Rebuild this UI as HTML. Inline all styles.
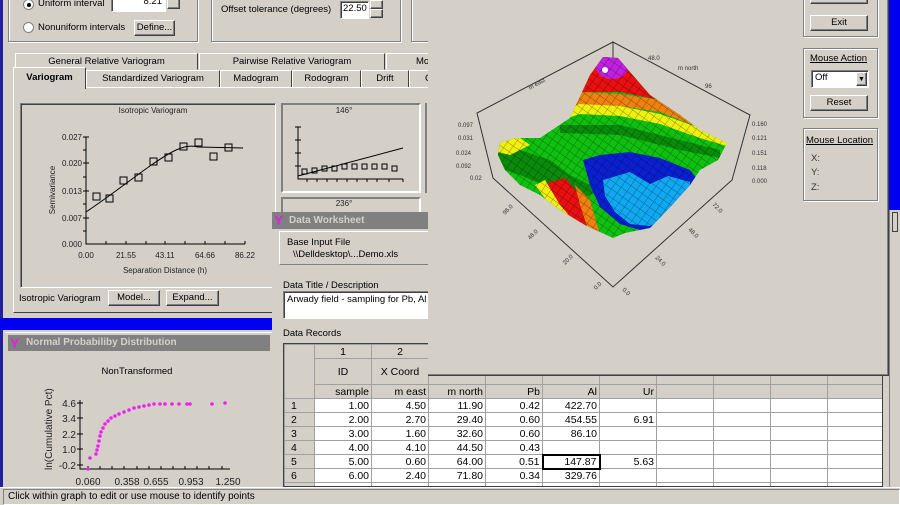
<!DOCTYPE html>
<html><head><meta charset="utf-8"><style>
*{box-sizing:border-box;margin:0;padding:0}
body{width:900px;height:505px;overflow:hidden;background:#d4d0c8;font-family:"Liberation Sans",sans-serif;font-size:9.5px;color:#000;position:relative}
.a{position:absolute;white-space:nowrap}
.grp{position:absolute;border:1px solid #808080;box-shadow:inset 1px 1px 0 #fff,1px 1px 0 #fff}
.btn{position:absolute;background:#d4d0c8;border:1px solid;border-color:#fff #404040 #404040 #fff;box-shadow:inset -1px -1px 0 #808080;text-align:center;line-height:14px}
.sunk{position:absolute;background:#fff;border:1px solid;border-color:#808080 #fff #fff #808080;box-shadow:inset 1px 1px 0 #404040;white-space:nowrap;overflow:hidden}
.tab{position:absolute;border:1px solid;border-color:#fff #404040 transparent #fff;text-align:center;line-height:15px;background:#d4d0c8;white-space:nowrap;overflow:hidden}
.raise{position:absolute;border:1px solid;border-color:#fff #808080 #808080 #fff}
table{border-collapse:collapse;font-size:10.5px}
td{border:1px solid #a0a0a0;height:14px;padding:0 2px;text-align:right;background:#fff;line-height:12px;white-space:nowrap;overflow:hidden}
td.h{background:#d4d0c8;text-align:center}
td.rh{background:#d4d0c8;text-align:left;padding-left:6px}
</style></head><body>
<div class="a" style="left:0;top:0;width:3px;height:505px;background:#2020a0"></div>

<!-- top groups -->
<div class="grp" style="left:8px;top:-6px;width:190px;height:48px"></div>
<div class="a" style="left:23px;top:-1px;width:11px;height:11px;border-radius:50%;background:#fff;border:1px solid #808080"></div>
<div class="a" style="left:27px;top:3px;width:4px;height:4px;border-radius:50%;background:#000"></div>
<div class="a" style="left:38px;top:-2px">Uniform interval</div>
<div class="sunk" style="left:111px;top:-6px;width:55px;height:18px;text-align:right;padding-right:3px;line-height:14px">8.21</div>
<div class="btn" style="left:167px;top:-2px;width:13px;height:11px"></div>
<div class="a" style="left:23px;top:22px;width:11px;height:11px;border-radius:50%;background:#fff;border:1px solid #808080"></div>
<div class="a" style="left:38px;top:22px">Nonuniform intervals</div>
<div class="btn" style="left:134px;top:20px;width:41px;height:16px">Define...</div>

<div class="grp" style="left:211px;top:-6px;width:190px;height:48px"></div>
<div class="a" style="left:221px;top:4px">Offset tolerance (degrees)</div>
<div class="sunk" style="left:340px;top:1px;width:29px;height:18px;line-height:14px;padding-left:2px">22.50</div>
<div class="btn" style="left:370px;top:0;width:13px;height:9px"></div>
<div class="btn" style="left:370px;top:9px;width:13px;height:9px"></div>
<div class="grp" style="left:411px;top:-6px;width:30px;height:48px"></div>

<!-- tabs -->
<div class="tab" style="left:15px;top:53px;width:183px;height:17px">General Relative Variogram</div>
<div class="tab" style="left:199px;top:53px;width:186px;height:17px">Pairwise Relative Variogram</div>
<div class="tab" style="left:386px;top:53px;width:50px;height:17px;text-align:left;padding-left:29px">Mo</div>
<div class="tab" style="left:86px;top:70px;width:134px;height:18px">Standardized Variogram</div>
<div class="tab" style="left:220px;top:70px;width:72px;height:18px">Madogram</div>
<div class="tab" style="left:292px;top:70px;width:69px;height:18px">Rodogram</div>
<div class="tab" style="left:361px;top:70px;width:48px;height:18px">Drift</div>
<div class="tab" style="left:409px;top:70px;width:30px;height:18px;text-align:left;padding-left:15px">C</div>
<div class="a" style="left:13px;top:87px;width:420px;height:226px;border-left:1px solid #fff;border-top:1px solid #fff;border-bottom:1px solid #404040"></div>
<div class="tab" style="left:13px;top:67px;width:73px;height:22px;font-weight:bold;border-bottom:none;line-height:20px">Variogram</div>

<!-- isotropic graph -->
<div class="a" style="left:20px;top:103px;width:256px;height:185px;border:1px solid;border-color:#808080 #fff #fff #808080;box-shadow:inset 1px 1px 0 #404040"></div>
<svg class="a" style="left:0;top:0" width="440" height="320" font-family="Liberation Sans" font-size="8">
<text x="153" y="113" text-anchor="middle" fill="#222">Isotropic Variogram</text>
<g stroke="#000" fill="none">
<path d="M86 137V244H245"/>
<path d="M83 137h6M83 150h3M83 163h6M83 177h3M83 191h6M83 204h3M83 218h6M83 231h3M106 244v-3M126 244v-3M146 244v-3M165 244v-3M185 244v-3M205 244v-3M225 244v-3M245 244v-3"/>
<path d="M86 212 C110 196,130 180,150 166 S185 143,198 147 L243 148"/>
<g stroke-width="1"><rect x="93" y="193" width="7" height="7"/><rect x="106" y="195" width="7" height="7"/><rect x="120" y="177" width="7" height="7"/><rect x="135" y="174" width="7" height="7"/><rect x="150" y="158" width="7" height="7"/><rect x="165" y="154" width="7" height="7"/><rect x="180" y="143" width="7" height="7"/><rect x="195" y="139" width="7" height="7"/><rect x="210" y="153" width="7" height="7"/><rect x="225" y="144" width="7" height="7"/></g>
</g>
<g fill="#222" text-anchor="end"><text x="82" y="140">0.027</text><text x="82" y="166">0.020</text><text x="82" y="194">0.013</text><text x="82" y="221">0.007</text><text x="82" y="247">0.000</text></g>
<g fill="#222" text-anchor="middle"><text x="86" y="258">0.00</text><text x="126" y="258">21.55</text><text x="165" y="258">43.11</text><text x="205" y="258">64.66</text><text x="245" y="258">86.22</text>
<text x="165" y="273">Separation Distance (h)</text>
<text transform="translate(55 190) rotate(-90)">Semivariance</text></g>
<text x="344" y="113" text-anchor="middle" fill="#222">146°</text>
<g stroke="#000" fill="none"><path d="M298 127V179H403M295 127h6M295 140h6M295 153h6M295 166h6M307 179v3M317 179v3M327 179v3M337 179v3M347 179v3M357 179v3M367 179v3M377 179v3M389 179v3M403 179v3"/>
<path d="M298 176 L403 148"/>
<rect x="302" y="169" width="5" height="5"/><rect x="312" y="168" width="5" height="5"/><rect x="322" y="166" width="5" height="5"/><rect x="332" y="166" width="5" height="5"/><rect x="342" y="164" width="5" height="5"/><rect x="352" y="164" width="5" height="5"/><rect x="362" y="164" width="5" height="5"/><rect x="372" y="164" width="5" height="5"/><rect x="382" y="164" width="5" height="5"/><rect x="392" y="166" width="5" height="5"/></g>
<text x="344" y="206" text-anchor="middle" fill="#222">236°</text>
</svg>
<div class="a" style="left:281px;top:103px;width:140px;height:90px;border:2px solid;border-color:#808080 #fff #fff #808080"></div>
<div class="a" style="left:281px;top:197px;width:140px;height:20px;border:2px solid;border-color:#808080 #fff #fff #808080"></div>
<div class="a" style="left:425px;top:103px;width:6px;height:90px;border-left:2px solid #808080"></div>
<div class="a" style="left:19px;top:293px">Isotropic Variogram</div>
<div class="btn" style="left:108px;top:290px;width:52px;height:16px">Model...</div>
<div class="btn" style="left:166px;top:290px;width:53px;height:16px">Expand...</div>

<div class="a" style="left:0;top:318px;width:272px;height:12px;background:#0000f0"></div>

<!-- normal probability window -->
<div class="a" style="left:5px;top:332px;width:267px;height:160px;background:#d4d0c8;border-top:1px solid #fff"></div>
<div class="a" style="left:8px;top:335px;width:262px;height:16px;background:#808080;color:#d4d0c8;font-weight:bold;line-height:16px;padding-left:18px;font-size:10px">Normal Probabiliby Distribution</div>
<div class="a" style="left:10px;top:335px;color:#e020e0;font-weight:bold;font-size:14px;line-height:16px">Y</div>
<svg class="a" style="left:0;top:350px" width="272" height="140" font-family="Liberation Sans" font-size="11">
<text x="137" y="24" text-anchor="middle" font-size="9.5">NonTransformed</text>
<g stroke="#000" fill="none"><path d="M80 50V119H230M77 53h6M77 68h6M77 84h6M77 99h6M77 115h6M88 119v-3M100 119v-3M112 119v-3M124 119v-3M137 119v-3M149 119v-3M161 119v-3M173 119v-3M185 119v-3M197 119v-3M209 119v-3M222 119v-3"/></g>
<g fill="#222" font-size="10" text-anchor="end"><text x="76" y="57">4.6</text><text x="76" y="72">3.4</text><text x="76" y="88">2.2</text><text x="76" y="103">1.0</text><text x="76" y="119">-0.2</text></g>
<g fill="#222" font-size="10" text-anchor="middle"><text x="88" y="135">0.060</text><text x="127" y="135">0.358</text><text x="156" y="135">0.655</text><text x="191" y="135">0.953</text><text x="228" y="135">1.250</text></g>
<text transform="translate(52 120) rotate(-90)" font-size="10" fill="#222">ln(Cumulative Pct)</text>
<g fill="#ee22ee">
<circle cx="88" cy="119" r="1.8"/><circle cx="90" cy="108" r="1.8"/><circle cx="96" cy="104" r="1.8"/><circle cx="97" cy="100" r="1.8"/><circle cx="98" cy="96" r="1.8"/><circle cx="99" cy="91" r="1.8"/><circle cx="100" cy="86" r="1.8"/><circle cx="101" cy="82" r="1.8"/><circle cx="103" cy="78" r="1.8"/><circle cx="105" cy="74" r="1.8"/><circle cx="108" cy="71" r="1.8"/><circle cx="111" cy="68" r="1.8"/><circle cx="115" cy="66" r="1.8"/><circle cx="119" cy="64" r="1.8"/><circle cx="124" cy="62" r="1.8"/><circle cx="129" cy="60" r="1.8"/><circle cx="134" cy="58" r="1.8"/><circle cx="139" cy="57" r="1.8"/><circle cx="144" cy="56" r="1.8"/><circle cx="149" cy="55" r="1.8"/><circle cx="154" cy="54" r="1.8"/><circle cx="160" cy="54" r="1.8"/><circle cx="165" cy="54" r="1.8"/><circle cx="172" cy="54" r="1.8"/><circle cx="179" cy="54" r="1.8"/><circle cx="187" cy="54" r="1.8"/><circle cx="190" cy="54" r="1.8"/><circle cx="212" cy="54" r="1.8"/><circle cx="225" cy="53" r="1.8"/>
</g>
</svg>

<!-- data worksheet -->
<div class="a" style="left:272px;top:212px;width:618px;height:275px;background:#d4d0c8"></div>
<div class="a" style="left:272px;top:212px;width:160px;height:17px;background:#808080;color:#d4d0c8;font-weight:bold;line-height:17px;padding-left:17px;font-size:10px">Data Worksheet</div>
<div class="a" style="left:274px;top:212px;color:#e020e0;font-weight:bold;font-size:14px;line-height:17px">Y</div>
<div class="raise" style="left:279px;top:231px;width:160px;height:34px"></div>
<div class="a" style="left:287px;top:237px">Base Input File</div>
<div class="a" style="left:293px;top:249px">\\Delldesktop\...Demo.xls</div>
<div class="a" style="left:283px;top:280px">Data Title / Description</div>
<div class="sunk" style="left:283px;top:291px;width:160px;height:28px;padding:1px 3px;line-height:13px">Arwady field - sampling for Pb, Al</div>
<div class="a" style="left:283px;top:328px">Data Records</div>
<div class="a" style="left:283px;top:343px;width:600px;height:144px;border:1px solid #404040;overflow:hidden;background:#d4d0c8">
<table style="table-layout:fixed;width:598px">
<colgroup><col style="width:30px"><col style="width:57px"><col style="width:57px"><col style="width:57px"><col style="width:57px"><col style="width:57px"><col style="width:57px"><col style="width:57px"><col style="width:57px"><col style="width:57px"><col style="width:55px"></colgroup>
<tr><td class="h" rowspan="3"></td><td class="h">1</td><td class="h">2</td><td class="h">3</td><td class="h">4</td><td class="h">5</td><td class="h">6</td><td class="h"></td><td class="h"></td><td class="h"></td><td class="h"></td></tr>
<tr style="height:26px"><td class="h">ID</td><td class="h">X Coord</td><td class="h"></td><td class="h"></td><td class="h"></td><td class="h"></td><td class="h"></td><td class="h"></td><td class="h"></td><td class="h"></td></tr>
<tr><td class="h" style="text-align:right">sample</td><td class="h" style="text-align:right">m east</td><td class="h" style="text-align:right">m north</td><td class="h" style="text-align:right">Pb</td><td class="h" style="text-align:right">Al</td><td class="h" style="text-align:right">Ur</td><td class="h"></td><td class="h"></td><td class="h"></td><td class="h"></td></tr>
<tr><td class="rh">1</td><td>1.00</td><td>4.50</td><td>11.90</td><td>0.42</td><td>422.70</td><td></td><td></td><td></td><td></td><td></td></tr>
<tr><td class="rh">2</td><td>2.00</td><td>2.70</td><td>29.40</td><td>0.60</td><td>454.55</td><td>6.91</td><td></td><td></td><td></td><td></td></tr>
<tr><td class="rh">3</td><td>3.00</td><td>1.60</td><td>32.60</td><td>0.60</td><td>86.10</td><td></td><td></td><td></td><td></td><td></td></tr>
<tr><td class="rh">4</td><td>4.00</td><td>4.10</td><td>44.50</td><td>0.43</td><td></td><td></td><td></td><td></td><td></td><td></td></tr>
<tr><td class="rh">5</td><td>5.00</td><td>0.60</td><td>64.00</td><td>0.51</td><td style="border:2px solid #000">147.87</td><td>5.63</td><td></td><td></td><td></td><td></td></tr>
<tr><td class="rh">6</td><td>6.00</td><td>2.40</td><td>71.80</td><td>0.34</td><td>329.76</td><td></td><td></td><td></td><td></td><td></td></tr>
<tr><td class="rh">7</td><td></td><td></td><td></td><td></td><td></td><td></td><td></td><td></td><td></td><td></td></tr>
</table></div>

<!-- right strip -->
<div class="a" style="left:889px;top:0;width:11px;height:210px;background:#0000f0"></div>
<div class="a" style="left:889px;top:210px;width:11px;height:277px;background:#d4d0c8;border-left:1px solid #808080"></div>
<div class="a" style="left:892px;top:212px;width:6px;height:20px;border:1px solid #404040"></div>

<!-- 3D window -->
<div class="a" style="left:428px;top:0;width:461px;height:376px;background:#d4d0c8;border-right:1px solid #404040;border-bottom:1px solid #404040;box-shadow:inset -1px -1px 0 #808080"></div>
<div class="grp" style="left:803px;top:-6px;width:75px;height:43px"></div>
<div class="btn" style="left:810px;top:-6px;width:58px;height:10px"></div>
<div class="btn" style="left:810px;top:15px;width:58px;height:16px">Exit</div>
<div class="grp" style="left:803px;top:48px;width:75px;height:70px"></div>
<div class="a" style="left:810px;top:53px;text-decoration:underline">Mouse Action</div>
<div class="sunk" style="left:811px;top:70px;width:58px;height:18px;padding-left:3px;line-height:14px">Off</div>
<div class="btn" style="left:856px;top:72px;width:11px;height:14px;font-size:7px">▼</div>
<div class="btn" style="left:810px;top:95px;width:58px;height:16px">Reset</div>
<div class="grp" style="left:803px;top:128px;width:75px;height:73px"></div>
<div class="a" style="left:806px;top:135px;text-decoration:underline">Mouse Location</div>
<div class="a" style="left:811px;top:153px;color:#333">X:</div>
<div class="a" style="left:811px;top:167px;color:#333">Y:</div>
<div class="a" style="left:811px;top:182px;color:#333">Z:</div>

<svg class="a" style="left:0;top:0" width="890" height="376">
<defs>
<clipPath id="s"><path d="M500 143L515 138L540 138L570 118L590 75L603 57L618 58L630 72L650 95L680 115L700 130L727 143L718 160L700 170L690 185L672 205L650 228L625 233L613 238L600 232L585 225L560 210L540 195L520 185L505 170L498 155Z"/></clipPath>
<pattern id="g" width="7" height="7" patternUnits="userSpaceOnUse" patternTransform="rotate(35)"><path d="M0 0H7M0 0V7" stroke="#000" stroke-width="0.7" opacity="0.55"/></pattern>
</defs>
<g stroke="#333" fill="none" stroke-width="1">
<path d="M613 42L477 113L493 178L613 287L732 180L750 115L613 42V58"/>
</g>
<g clip-path="url(#s)">
<rect x="490" y="40" width="250" height="210" fill="#10c010"/>
<path d="M490 40H740V130L700 118L660 100L620 92L580 92L565 112L490 125Z" fill="#e81010"/>
<path d="M560 100L580 92L620 94L660 100L700 116L740 130V142L700 128L660 112L620 106L580 106L560 116Z" fill="#f08010"/>
<path d="M555 112L580 104L620 106L660 114L700 128L740 142V150L700 138L660 124L620 116L580 114L555 122Z" fill="#f0f010"/>
<path d="M490 140L520 150L550 160L570 175L600 190L580 200L550 188L520 175L490 165Z" fill="#0a8a0a"/>
<path d="M560 125L620 125L680 140L720 150L720 158L680 150L620 135L560 133Z" fill="#0a8a0a"/>
<path d="M490 135L520 138L530 145L510 155L490 150Z" fill="#f0f010"/>
<path d="M540 185L565 178L580 195L595 225L600 240L580 230L555 210Z" fill="#e81010"/>
<path d="M575 185L590 200L600 235L590 235L580 205Z" fill="#f08010"/>
<path d="M535 185L545 180L560 205L580 228L570 228L550 205Z" fill="#f0f010"/>
<path d="M583 160L600 155L630 152L660 158L690 170L702 185L685 205L665 225L640 230L620 224L600 207L590 185Z" fill="#0a20d0"/>
<path d="M603 180L630 172L650 184L668 176L690 182L690 200L670 216L650 226L630 224L615 212L605 196Z" fill="#10a8f0"/>
<ellipse cx="612" cy="67" rx="16" ry="12" fill="#c020e0"/>
<circle cx="605" cy="70" r="3" fill="#fff"/>
<rect x="490" y="40" width="250" height="210" fill="url(#g)"/>
</g>
<g font-family="Liberation Sans" font-size="6" fill="#333">
<text x="458" y="127">0.097</text><text x="458" y="140">0.031</text><text x="456" y="155">0.024</text><text x="456" y="168">0.092</text><text x="470" y="180">0.02</text>
<text x="752" y="126">0.160</text><text x="752" y="140">0.121</text><text x="752" y="155">0.151</text><text x="752" y="170">0.118</text><text x="752" y="183">0.000</text>
<text x="505" y="215" transform="rotate(-45 505 215)">96.0</text><text x="530" y="240" transform="rotate(-45 530 240)">48.0</text><text x="565" y="265" transform="rotate(-45 565 265)">20.0</text><text x="596" y="290" transform="rotate(-45 596 290)">0.0</text>
<text x="622" y="290" transform="rotate(45 622 290)">0.0</text><text x="655" y="258" transform="rotate(45 655 258)">24.0</text><text x="688" y="230" transform="rotate(45 688 230)">48.0</text><text x="712" y="205" transform="rotate(45 712 205)">72.0</text>
<text x="530" y="90" transform="rotate(-30 530 90)">m east</text><text x="648" y="60">48.0</text><text x="678" y="70">m north</text><text x="705" y="88">96</text>
</g>
</svg>

<!-- status bar -->
<div class="a" style="left:0;top:487px;width:900px;height:18px;background:#d4d0c8;border-top:1px solid #fff"></div>
<div class="a" style="left:3px;top:489px;width:897px;height:16px;border:1px solid;border-color:#808080 #fff #fff #808080;padding-left:4px;line-height:14px;font-size:10px">Click within graph to edit or use mouse to identify points</div>
</body></html>
